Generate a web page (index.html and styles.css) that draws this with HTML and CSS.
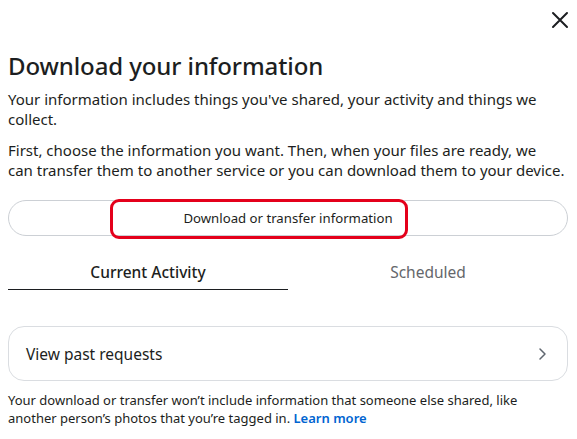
FILE: index.html
```html
<!DOCTYPE html>
<html lang="en">
<head>
<meta charset="utf-8">
<title>Download your information</title>
<link rel="stylesheet" href="styles.css">
</head>
<body>
<div class="dialog">
  <div class="topbar">
    <button class="close" aria-label="Close">
      <svg width="18" height="18" viewBox="0 0 18 18"><path d="M2 2 L16 16 M16 2 L2 16" stroke="#1c1e21" stroke-width="2" stroke-linecap="round"/></svg>
    </button>
  </div>
  <h1 class="title">Download your information</h1>
  <p class="text">Your information includes things you've shared, your activity and things we collect.</p>
  <p class="text">First, choose the information you want. Then, when your files are ready, we<br>can transfer them to another service or you can download them to your device.</p>
  <div class="action">
    <button class="pill"><span class="pill-label">Download or transfer information</span></button>
    <span class="highlight"></span>
  </div>
  <div class="tabs">
    <div class="tab active">Current Activity</div>
    <div class="tab">Scheduled</div>
  </div>
  <div class="card">
    <span class="card-label">View past requests</span>
    <svg class="chev" width="10" height="14" viewBox="0 0 10 14"><path d="M3 2 L8 7 L3 12" fill="none" stroke="#606770" stroke-width="1.5" stroke-linecap="round" stroke-linejoin="round"/></svg>
  </div>
  <p class="note">Your download or transfer won’t include information that someone else shared, like another person’s photos that you’re tagged in. <a href="#" class="link">Learn more</a></p>
</div>
</body>
</html>
```
FILE: styles.css
```css
* { box-sizing: border-box; }
html, body { margin: 0; padding: 0; background: #fff; }
body {
  font-family: "Noto Sans", "Open Sans", sans-serif;
  color: #1c1e21;
}
.dialog {
  width: 577px;
  padding: 0 9px 0 8px;
}
.topbar {
  display: flex;
  justify-content: flex-end;
  height: 39px;
  align-items: center;
}
.close {
  background: none;
  border: none;
  padding: 0;
  width: 18px;
  height: 18px;
  display: flex;
  align-items: center;
  justify-content: center;
  margin-right: -1px;
  cursor: pointer;
}
.title {
  font-size: 24px;
  font-weight: 500;
  margin: 12px 0 0;
  line-height: 30px;
  letter-spacing: -0.1px;
}
.text {
  font-size: 15px;
  line-height: 20px;
  margin: 8px 0 0;
  white-space: nowrap;
}
.text:first-of-type { white-space: normal; }
.text + .text { margin-top: 11px; }
.action {
  position: relative;
  margin-top: 20px;
}
.pill {
  width: 100%;
  height: 36px;
  border-radius: 18px;
  border: 1px solid #ccd0d5;
  background: #fff;
  font-family: inherit;
  font-size: 13.2px;
  color: #1c1e21;
  display: flex;
  align-items: center;
  justify-content: center;
  padding: 0 0 1px;
}
.highlight {
  position: absolute;
  left: 102px;
  top: -1px;
  width: 298px;
  height: 40px;
  border: 3px solid #e4001b;
  border-radius: 9px;
  pointer-events: none;
}
.tabs {
  display: grid;
  grid-template-columns: 280px 1fr;
  margin-top: 20px;
}
.tab {
  text-align: center;
  font-size: 15.5px;
  height: 34px;
  line-height: 32px;
  color: #65676b;
}
.tab.active {
  color: #1c1e21;
  font-weight: 500;
  border-bottom: 1.5px solid #1c1e21;
}
.card {
  margin-top: 36px;
  height: 55px;
  border: 1px solid #dadde1;
  border-radius: 16px;
  display: flex;
  align-items: center;
  justify-content: space-between;
  padding: 0 20px 0 17px;
}
.card-label { font-size: 15.5px; }
.note {
  font-size: 13px;
  line-height: 18px;
  margin: 10px 0 0;
}
.link {
  color: #0064d1;
  font-weight: 600;
  text-decoration: none;
}
```
